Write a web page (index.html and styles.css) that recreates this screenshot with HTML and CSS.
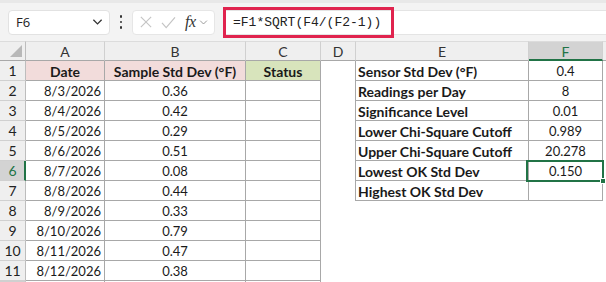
FILE: index.html
```html
<!DOCTYPE html>
<html lang="en">
<head>
<meta charset="UTF-8">
<title>Chi-Square Std Dev Check</title>
<link rel="stylesheet" href="styles.css">
</head>
<body>

<!-- formula bar -->
<div class="toolbar">
  <div class="namebox">
    <span>F6</span>
    <svg class="chev" viewBox="0 0 12 8"><polyline points="1.5 1.5 6 6 10.5 1.5" /></svg>
  </div>
  <div class="dots"><i></i><i></i><i></i></div>
  <div class="fbtns">
    <svg class="ico-x" viewBox="0 0 14 14"><line x1="1" y1="1" x2="13" y2="13"/><line x1="13" y1="1" x2="1" y2="13"/></svg>
    <svg class="ico-ok" viewBox="0 0 16 14"><polyline points="1 7.5 5.5 12.5 15 1.5"/></svg>
    <span class="fx">fx</span>
    <svg class="chev small" viewBox="0 0 12 8"><polyline points="1.5 1.5 6 6 10.5 1.5" /></svg>
  </div>
  <div class="fbar">
    <span class="formula">=F1*SQRT(F4/(F2-1))</span>
  </div>
</div>

<!-- grid -->
<div class="sheet">
  <div class="corner"><span class="tri"></span></div>
  <div class="hd">A</div>
  <div class="hd">B</div>
  <div class="hd">C</div>
  <div class="hd">D</div>
  <div class="hd">E</div>
  <div class="hd sel">F</div>
  <div class="hd last"></div>

  <div class="rh">1</div>
  <div class="c pink b ctr">Date</div>
  <div class="c pink b ctr">Sample Std Dev (°F)</div>
  <div class="c green b ctr">Status</div>
  <div class="d edge"></div>
  <div class="c b l">Sensor Std Dev (°F)</div>
  <div class="c ctr">0.4</div>
  <div class="x"></div>

  <div class="rh">2</div>
  <div class="c r">8/3/2026</div>
  <div class="c ctr">0.36</div>
  <div class="c"></div>
  <div class="d edge"></div>
  <div class="c b l">Readings per Day</div>
  <div class="c ctr">8</div>
  <div class="x"></div>

  <div class="rh">3</div>
  <div class="c r">8/4/2026</div>
  <div class="c ctr">0.42</div>
  <div class="c"></div>
  <div class="d edge"></div>
  <div class="c b l">Significance Level</div>
  <div class="c ctr">0.01</div>
  <div class="x"></div>

  <div class="rh">4</div>
  <div class="c r">8/5/2026</div>
  <div class="c ctr">0.29</div>
  <div class="c"></div>
  <div class="d edge"></div>
  <div class="c b l">Lower Chi-Square Cutoff</div>
  <div class="c ctr">0.989</div>
  <div class="x"></div>

  <div class="rh">5</div>
  <div class="c r">8/6/2026</div>
  <div class="c ctr">0.51</div>
  <div class="c"></div>
  <div class="d edge"></div>
  <div class="c b l">Upper Chi-Square Cutoff</div>
  <div class="c ctr">20.278</div>
  <div class="x"></div>

  <div class="rh sel">6</div>
  <div class="c r">8/7/2026</div>
  <div class="c ctr">0.08</div>
  <div class="c"></div>
  <div class="d edge"></div>
  <div class="c b l">Lowest OK Std Dev</div>
  <div class="c ctr active">0.150<span class="selbox"><i class="handle"></i></span></div>
  <div class="x"></div>

  <div class="rh">7</div>
  <div class="c r">8/8/2026</div>
  <div class="c ctr">0.44</div>
  <div class="c"></div>
  <div class="d edge"></div>
  <div class="c b l">Highest OK Std Dev</div>
  <div class="c ctr"></div>
  <div class="x"></div>

  <div class="rh">8</div>
  <div class="c r">8/9/2026</div>
  <div class="c ctr">0.33</div>
  <div class="c"></div>
  <div class="d"></div>
  <div class="d"></div>
  <div class="d"></div>
  <div class="x"></div>

  <div class="rh">9</div>
  <div class="c r">8/10/2026</div>
  <div class="c ctr">0.79</div>
  <div class="c"></div>
  <div class="d"></div>
  <div class="d"></div>
  <div class="d"></div>
  <div class="x"></div>

  <div class="rh">10</div>
  <div class="c r">8/11/2026</div>
  <div class="c ctr">0.47</div>
  <div class="c"></div>
  <div class="d"></div>
  <div class="d"></div>
  <div class="d"></div>
  <div class="x"></div>

  <div class="rh">11</div>
  <div class="c r">8/12/2026</div>
  <div class="c ctr">0.38</div>
  <div class="c"></div>
  <div class="d"></div>
  <div class="d"></div>
  <div class="d"></div>
  <div class="x"></div>

  <div class="rh"></div>
  <div class="c"></div>
  <div class="c"></div>
  <div class="c"></div>
</div>

</body>
</html>
```

FILE: styles.css
```css
*, *::before, *::after { box-sizing: border-box; margin: 0; padding: 0; }

:root {
  --bar: #f3f3f3;
  --head: #efefef;
  --head-sel: #d3d3d3;
  --line: #a8a8a8;
  --soft: #d0d0d0;
  --green: #217346;
  --red: #e0234e;
  --text: #1a1a1a;
}

body {
  width: 606px;
  height: 282px;
  overflow: hidden;
  background: #fff;
  color: var(--text);
  font-family: Lato, "Liberation Sans", sans-serif;
}

/* ── FORMULA BAR ── */
.toolbar {
  height: 41px;
  background: var(--bar);
  display: flex;
  align-items: center;
  padding-left: 8px;
  border-top: 3px solid #e8e8e8;
}

.namebox {
  width: 102px;
  height: 25px;
  background: #fff;
  border: 1px solid #e2e2e2;
  border-radius: 4px;
  display: flex;
  align-items: center;
  justify-content: space-between;
  padding: 0 6px 0 7px;
  font-family: "Open Sans", sans-serif;
  font-size: 13px;
  color: #222;
}

.chev {
  width: 11px;
  height: 8px;
  fill: none;
  stroke: #333;
  stroke-width: 1.4;
}
.chev.small { width: 9px; height: 7px; stroke: #888; stroke-width: 1.1; }

.dots {
  width: 22px;
  display: flex;
  flex-direction: column;
  align-items: center;
  gap: 3px;
}
.dots i {
  width: 2.5px;
  height: 2.5px;
  background: #333;
  border-radius: 50%;
}

.fbtns {
  width: 83px;
  height: 25px;
  background: #fff;
  border: 1px solid #e6e6e6;
  border-radius: 4px;
  display: flex;
  align-items: center;
  padding-left: 7px;
}
.ico-x {
  width: 12px;
  height: 12px;
  stroke: #c4c4c4;
  stroke-width: 1.3;
  margin-right: 9px;
}
.ico-ok {
  width: 15px;
  height: 13px;
  fill: none;
  stroke: #c4c4c4;
  stroke-width: 1.3;
  margin-right: 9px;
}
.fx {
  font-family: "Liberation Serif", serif;
  font-style: italic;
  font-size: 16px;
  color: #333;
  margin-right: 3px;
  letter-spacing: -0.5px;
}

.fbar {
  flex: 1;
  height: 25px;
  margin-left: 8px;
  background: #fff;
  border-top: 1px solid #e4e4e4;
  border-bottom: 1px solid #e4e4e4;
  display: flex;
  align-items: center;
}

.formula {
  height: 31px;
  width: 171px;
  flex-shrink: 0;
  border: 3px solid var(--red);
  display: flex;
  align-items: center;
  padding-left: 7px;
  font-family: "Liberation Mono", monospace;
  font-size: 13px;
  color: #222;
}

/* ── SHEET ── */
.sheet {
  display: grid;
  grid-template-columns: 26px 79px 141px 75px 35px 173px 74px 3px;
  grid-template-rows: 20px repeat(11, 20px) 1px;
  font-size: 13px;
}

.corner {
  background: var(--head);
  border-top: 1px solid #dcdcdc;
  border-right: 1px solid #bdbdbd;
  border-bottom: 1px solid var(--line);
  display: flex;
  align-items: flex-end;
  justify-content: flex-end;
  padding: 0 3px 3px 0;
}
.tri {
  width: 12px;
  height: 12px;
  background: #b8b8b8;
  clip-path: polygon(100% 0, 100% 100%, 0 100%);
}

.hd {
  background: var(--head);
  border-top: 1px solid #dcdcdc;
  border-right: 1px solid var(--soft);
  border-bottom: 1px solid var(--line);
  display: flex;
  align-items: center;
  justify-content: center;
  color: #333;
  font-size: 14px;
  line-height: 1;
  padding-top: 1px;
}
.hd.last { border-right: none; }
.hd.sel {
  background: var(--head-sel);
  color: var(--green);
  border-bottom: 2px solid var(--green);
  padding-top: 2px;
}

.rh {
  background: var(--head);
  border-right: 1px solid #bdbdbd;
  border-bottom: 1px solid var(--soft);
  display: flex;
  align-items: center;
  justify-content: center;
  color: #222;
  font-size: 14px;
}
.rh.sel {
  background: var(--head-sel);
  color: var(--green);
  border-right: 2px solid var(--green);
  padding-left: 1px;
}

.c {
  border-right: 1px solid var(--line);
  border-bottom: 1px solid var(--line);
  display: flex;
  align-items: center;
  padding: 1px 4px 0;
  white-space: nowrap;
}
.c.ctr { justify-content: center; }
.c.r { justify-content: flex-end; padding-right: 3px; }
.c.l { padding-left: 2px; }
.c.b { font-weight: 700; font-size: 14px; }
.pink { background: #f2dcdb; }
.green { background: #d8e4bc; }

.d.edge { border-right: 1px solid var(--line); }

.active { position: relative; }
.selbox {
  position: absolute;
  top: -1px;
  left: -3px;
  right: -2px;
  bottom: -2px;
  border: 2px solid var(--green);
}
.handle {
  position: absolute;
  right: -4px;
  bottom: -4px;
  width: 6px;
  height: 6px;
  background: var(--green);
  border: 1px solid #fff;
}
```
